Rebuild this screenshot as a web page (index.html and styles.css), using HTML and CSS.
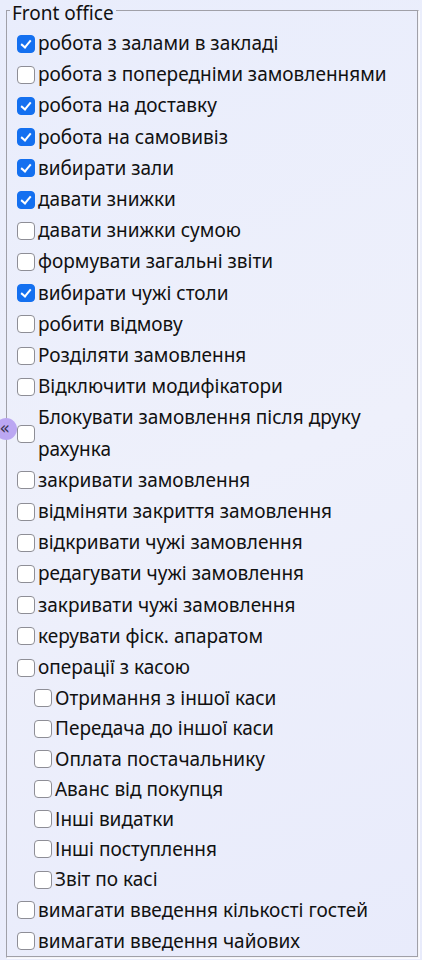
FILE: index.html
```html
<!DOCTYPE html>
<html lang="uk">
<head>
<meta charset="utf-8">
<link rel="stylesheet" href="styles.css">
</head>
<body>
<fieldset class="group">
  <legend class="group-title"><span class="group-text">Front office</span></legend>
  <div class="list">
    <label class="row"><input type="checkbox" checked><span>робота з залами в закладі</span></label>
    <label class="row"><input type="checkbox"><span>робота з попередніми замовленнями</span></label>
    <label class="row"><input type="checkbox" checked><span>робота на доставку</span></label>
    <label class="row"><input type="checkbox" checked><span>робота на самовивіз</span></label>
    <label class="row"><input type="checkbox" checked><span>вибирати зали</span></label>
    <label class="row"><input type="checkbox" checked><span>давати знижки</span></label>
    <label class="row"><input type="checkbox"><span>давати знижки сумою</span></label>
    <label class="row"><input type="checkbox"><span>формувати загальні звіти</span></label>
    <label class="row"><input type="checkbox" checked><span>вибирати чужі столи</span></label>
    <label class="row"><input type="checkbox"><span>робити відмову</span></label>
    <label class="row"><input type="checkbox"><span>Розділяти замовлення</span></label>
    <label class="row"><input type="checkbox"><span>Відключити модифікатори</span></label>
    <label class="row"><input type="checkbox"><span>Блокувати замовлення після друку рахунка</span></label>
    <label class="row"><input type="checkbox"><span>закривати замовлення</span></label>
    <label class="row"><input type="checkbox"><span>відміняти закриття замовлення</span></label>
    <label class="row"><input type="checkbox"><span>відкривати чужі замовлення</span></label>
    <label class="row"><input type="checkbox"><span>редагувати чужі замовлення</span></label>
    <label class="row"><input type="checkbox"><span>закривати чужі замовлення</span></label>
    <label class="row"><input type="checkbox"><span>керувати фіск. апаратом</span></label>
    <label class="row"><input type="checkbox"><span>операції з касою</span></label>
    <div class="sub">
      <label class="row"><input type="checkbox"><span>Отримання з іншої каси</span></label>
      <label class="row"><input type="checkbox"><span>Передача до іншої каси</span></label>
      <label class="row"><input type="checkbox"><span>Оплата постачальнику</span></label>
      <label class="row"><input type="checkbox"><span>Аванс від покупця</span></label>
      <label class="row"><input type="checkbox"><span>Інші видатки</span></label>
      <label class="row"><input type="checkbox"><span>Інші поступлення</span></label>
      <label class="row"><input type="checkbox"><span>Звіт по касі</span></label>
    </div>
    <label class="row"><input type="checkbox"><span>вимагати введення кількості гостей</span></label>
    <label class="row"><input type="checkbox"><span>вимагати введення чайових</span></label>
  </div>
</fieldset>
<div class="toggle">«</div>
</body>
</html>
```
FILE: styles.css
```css
html, body {
  margin: 0;
  padding: 0;
}
body {
  width: 422px;
  height: 960px;
  overflow: hidden;
  position: relative;
  background: linear-gradient(160deg, #e9edfc 0%, #eef0fb 50%, #e8ebfb 100%);
  font-family: "Noto Sans", "Open Sans", sans-serif;
  color: #111;
}
.group {
  margin: 0 3px 0 6px;
  padding: 0 2px 4px 0;
  border-color: #a0a0a8 #f4f4f8 #f4f4f8 #a0a0a8;
  border-style: solid;
  border-width: 1px;
  box-shadow: inset -1px -1px 0 #a0a0a8, 1px 1px 0 #fafaff;
  height: 958px;
  box-sizing: border-box;
}
.group-title {
  font-size: 19px;
  line-height: 20px;
  height: 20px;
  padding: 0 2px;
  margin-left: 3px;
}
.group-text {
  display: inline-block;
  vertical-align: top;
  line-height: 26px;
  margin-bottom: -6px;
}
.list {
  display: flex;
  flex-direction: column;
  padding: 8px 0 0 11px;
}
.row {
  display: flex;
  align-items: center;
  font-size: 19px;
  line-height: 31.2px;
}
.row input {
  -webkit-appearance: none;
  appearance: none;
  position: relative;
  width: 18px;
  height: 18px;
  margin: 0 3px 0 -1px;
  flex: none;
  box-sizing: border-box;
  border: 1px solid #8e8e96;
  border-radius: 4px;
  background: #fff;
}
.row input:checked {
  background: #1470f0;
  border-color: #1470f0;
}
.row input:checked::after {
  content: "";
  position: absolute;
  left: 5px;
  top: 2px;
  width: 4px;
  height: 8px;
  border: solid #fff;
  border-width: 0 2.3px 2.3px 0;
  transform: rotate(40deg);
}
.sub {
  display: flex;
  flex-direction: column;
  padding-left: 17px;
}
.sub .row {
  line-height: 30.2px;
}
.toggle {
  position: absolute;
  left: -5px;
  top: 418px;
  width: 22px;
  height: 22px;
  border-radius: 50%;
  background: #bba7f2;
  color: #3a3550;
  font-size: 17px;
  line-height: 21px;
  text-align: right;
  padding-right: 7px;
  box-sizing: border-box;
  font-family: "DejaVu Sans", sans-serif;
}
```
